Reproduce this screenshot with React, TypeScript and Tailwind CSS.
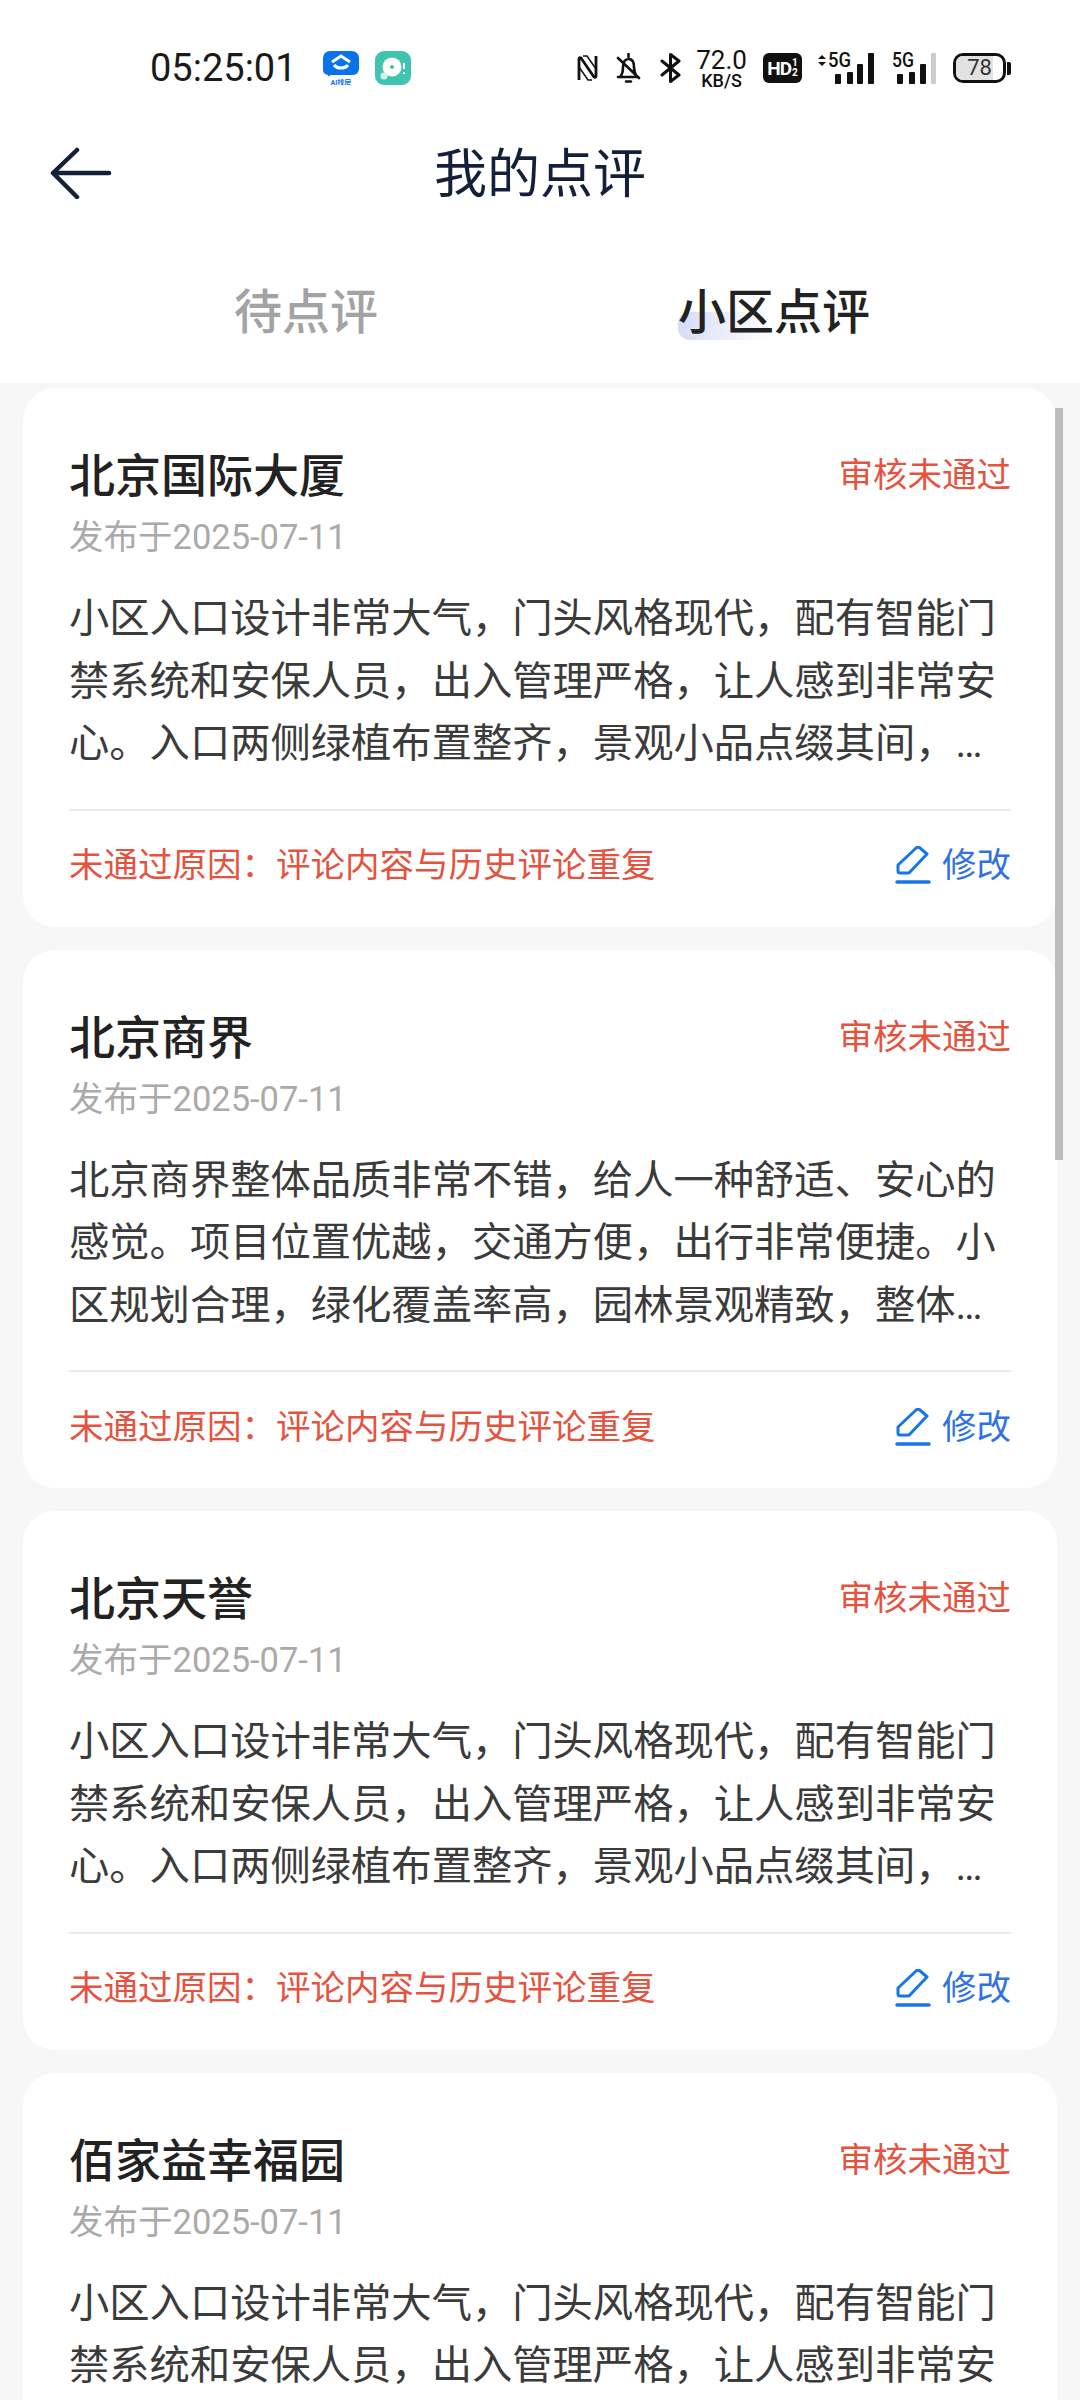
const FONT = "font-['Roboto','Noto_Sans_CJK_SC',sans-serif]";

type Review = {
  name: string;
  body: string;
};

const TEXT_A =
  '小区入口设计非常大气，门头风格现代，配有智能门禁系统和安保人员，出入管理严格，让人感到非常安心。入口两侧绿植布置整齐，景观小品点缀其间，整体环境舒适宜人，令人十分满意。';
const TEXT_B =
  '北京商界整体品质非常不错，给人一种舒适、安心的感觉。项目位置优越，交通方便，出行非常便捷。小区规划合理，绿化覆盖率高，园林景观精致，整体环境舒适宜人，令人十分满意。';

const reviews: Review[] = [
  { name: '北京国际大厦', body: TEXT_A },
  { name: '北京商界', body: TEXT_B },
  { name: '北京天誉', body: TEXT_A },
  { name: '佰家益幸福园', body: TEXT_A },
];

function StatusBar() {
  return (
    <div className="flex h-[136px] items-center pr-[69px] pl-[150px]">
      <span className="text-[38px] leading-[40px] tracking-[0px] text-[#1a1a1a]">05:25:01</span>
      <svg viewBox="0 0 36 34" className="ml-[26px] h-[34px] w-[36px]">
        <path d="M7 0h22a7 7 0 0 1 7 7v11a6 6 0 0 1-6 6H8l-3 1.500V24a5 5 0 0 1-5-5V7a7 7 0 0 1 7-7z" fill="#0a73e8" />
        <path d="M9 11l9-6 9 6" fill="none" stroke="#fff" strokeWidth="3" />
        <path d="M11 14a8 6 0 0 0 14 0" fill="none" stroke="#fff" strokeWidth="3" />
        <text x="18" y="33.500" textAnchor="middle" fontSize="7" fontWeight="700" fill="#0a73e8">AI找房</text>
      </svg>
      <svg viewBox="0 0 36 34" className="ml-[16px] h-[34px] w-[36px]">
        <rect width="36" height="34" rx="9" fill="#3fc4b0" />
        <circle cx="17" cy="16" r="9.500" fill="#fff" />
        <circle cx="17" cy="16" r="2" fill="#3fc4b0" />
        <circle cx="9" cy="25" r="3.500" fill="#d8f4ef" />
        <path d="M29 12v6M29 21v2" stroke="#fff" strokeWidth="2" />
      </svg>
      <div className="ml-auto flex items-center">
        <svg viewBox="0 0 21 28" className="h-[28px] w-[21px]" fill="none" stroke="#111" strokeWidth="2.800">
          <path d="M2 26V5q0-2 2-1l13 19q2 1 2-1V2" strokeLinejoin="round" />
          <path d="M6 2h4l9 13M15 26h-4L2 13" strokeWidth="1.500" />
        </svg>
        <svg viewBox="0 0 25 30" className="ml-[18px] h-[30px] w-[25px]" fill="none" stroke="#111" strokeWidth="2.600" strokeLinecap="round" strokeLinejoin="round">
          <path d="M2 24h19M4 24c3-3 3-6 3-10 0-5 2-8 5.500-8s5.500 3 5.500 8c0 4 1 7 3 10M2 5l21 20M12.500 1v3" />
          <path d="M10 28.500h5" strokeWidth="2.400" />
        </svg>
        <svg viewBox="0 0 21 30" className="ml-[19px] h-[30px] w-[21px]" fill="none" stroke="#111" strokeWidth="3" strokeLinejoin="round" strokeLinecap="round">
          <path d="M2 8l17 14-8.500 6.500v-27L19 8 2 22" />
        </svg>
        <div className="ml-[17px] flex w-[47px] flex-col items-center text-[#111]">
          <span className="text-[26px] leading-[23px]">72.0</span>
          <span className="mt-[1px] text-[18px] leading-[15px] font-medium">KB/S</span>
        </div>
        <div className="ml-[18px] flex h-[30px] w-[39px] items-center justify-center rounded-[6px] bg-[#111] font-bold text-white">
          <span className="text-[19px] leading-none tracking-[-1px]">HD</span>
          <span className="ml-[1px] flex flex-col text-[10px] leading-[10px]">
            <span>1</span>
            <span>2</span>
          </span>
        </div>
        <svg viewBox="0 0 57 32" className="ml-[15px] h-[32px] w-[57px]">
          <path d="M1 7l4-4 4 4zM1 10l4 4 4-4z" fill="#111" />
          <text x="11" y="15" fontSize="20" fontWeight="500" textLength="23" lengthAdjust="spacingAndGlyphs" fill="#111">5G</text>
          <rect x="18" y="22" width="6" height="10" rx="1" fill="#111" />
          <rect x="30" y="20" width="6" height="12" rx="1" fill="#111" />
          <rect x="40" y="12" width="6" height="20" rx="1" fill="#111" />
          <rect x="51" y="1" width="6" height="31" rx="1" fill="#111" />
        </svg>
        <svg viewBox="0 0 44 32" className="ml-[18px] h-[32px] w-[44px]">
          <text x="0" y="15" fontSize="20" fontWeight="500" textLength="22" lengthAdjust="spacingAndGlyphs" fill="#111">5G</text>
          <rect x="5" y="22" width="6" height="10" rx="1" fill="#111" />
          <rect x="17" y="20" width="6" height="12" rx="1" fill="#111" />
          <rect x="28" y="12" width="6" height="20" rx="1" fill="#111" />
          <rect x="39" y="1" width="5" height="31" rx="1" fill="#ccc" />
        </svg>
        <div className="ml-[17px] flex items-center">
          <div className="relative flex h-[30px] w-[53px] items-center justify-center overflow-hidden rounded-[10px] border-[3px] border-[#111]">
            <div className="absolute inset-y-0 left-0 w-[78%] bg-[#e2e2e2]" />
            <span className="relative text-[22px] leading-none text-[#333]">78</span>
          </div>
          <div className="ml-[1px] h-[13px] w-[4px] rounded-r-[2px] bg-[#111]" />
        </div>
      </div>
    </div>
  );
}

function Header() {
  return (
    <div className="relative flex h-[76px] items-center justify-center pt-[2px]">
      <svg viewBox="0 0 62 52" className="absolute top-[11px] left-[50px] h-[52px] w-[62px]" fill="none" stroke="#14203a" strokeWidth="4.500" strokeLinecap="round" strokeLinejoin="round">
        <path d="M27 3L3 26l24 24M3 26h56" />
      </svg>
      <h1 className="text-[53px] leading-none text-[#14203a]">我的点评</h1>
    </div>
  );
}

function Tabs() {
  return (
    <div className="flex h-[171px] items-start bg-white pt-[69px] text-[48px] leading-[64px] font-medium">
      <div className="flex w-[612px] justify-center text-[#a3a3a3]">待点评</div>
      <div className="flex w-[324px] justify-center">
        <div className="relative">
          <div className="absolute top-[31px] left-0 h-[28px] w-[92px] rounded-l-[12px] bg-gradient-to-r from-[#d6dcf7] to-white" />
          <span className="relative text-[#222]">小区点评</span>
        </div>
      </div>
    </div>
  );
}

function ReviewCard({ review }: { review: Review }) {
  return (
    <div className="rounded-[32px] bg-white px-[46px] pt-[64px]">
      <div className="flex items-start justify-between">
        <h2 className="text-[46px] leading-[48px] font-medium text-[#222]">{review.name}</h2>
        <span className="text-[34.5px] leading-[46px] text-[#e5533f]">审核未通过</span>
      </div>
      <p className="mt-[15px] text-[34.5px] leading-[44px] text-[#aaa]">发布于2025-07-11</p>
      <p className="mt-[29px] line-clamp-3 text-[40.3px] leading-[62.5px] text-[#3b3b3b]">{review.body}</p>
      <div className="mt-[33px] flex h-[118px] items-center justify-between border-t-2 border-[#ececec] pb-[7px]">
        <span className="text-[34.5px] leading-[46px] text-[#e5533f]">未通过原因：评论内容与历史评论重复</span>
        <span className="flex items-center text-[#2f72e0]">
          <svg viewBox="0 0 36 38" className="h-[38px] w-[36px]" fill="none" stroke="#1677e8" strokeWidth="3" strokeLinejoin="round" strokeLinecap="round">
            <path d="M25 2l7 6-18 19H5a2 2 0 0 1-2-2v-6L20 3a3.500 3.500 0 0 1 5-1z" />
            <path d="M2 36h32" strokeWidth="3.500" />
          </svg>
          <span className="ml-[11px] text-[34.5px] leading-[46px]">修改</span>
        </span>
      </div>
    </div>
  );
}

export default function App() {
  return (
    <div className={`${FONT} relative h-[2400px] w-[1080px] overflow-hidden bg-white`}>
      <StatusBar />
      <Header />
      <Tabs />
      <div className="flex h-[2017px] flex-col gap-[23px] overflow-hidden bg-[#f7f7f7] px-[23px] pt-[5px]">
        {reviews.map((r) => (
          <ReviewCard key={r.name} review={r} />
        ))}
      </div>
      {/* overlay scrollbar */}
      <div className="absolute top-[408px] right-[17px] h-[752px] w-[8px] bg-[#bdbdbd]" />
    </div>
  );
}
